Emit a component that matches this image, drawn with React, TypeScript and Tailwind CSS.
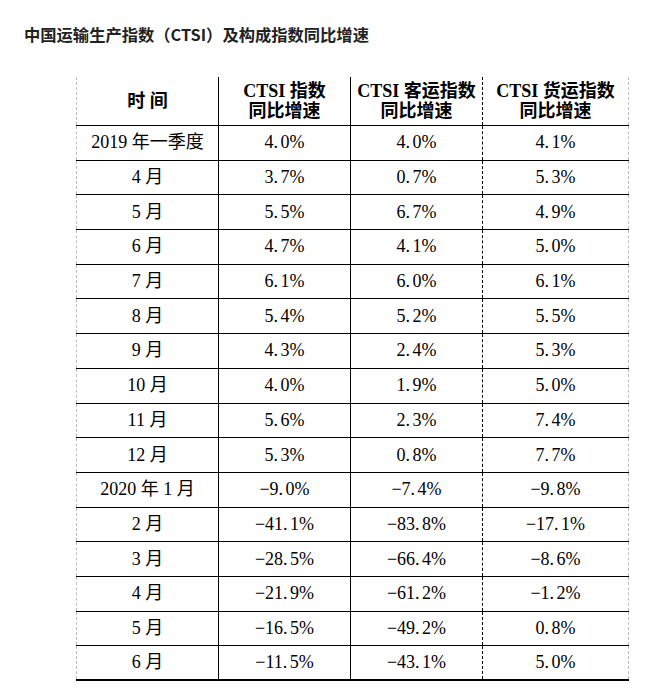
import React from 'react';

const rows: [string, string, string, string][] = [
  ['2019 年一季度', '4.0%', '4.0%', '4.1%'],
  ['4 月', '3.7%', '0.7%', '5.3%'],
  ['5 月', '5.5%', '6.7%', '4.9%'],
  ['6 月', '4.7%', '4.1%', '5.0%'],
  ['7 月', '6.1%', '6.0%', '6.1%'],
  ['8 月', '5.4%', '5.2%', '5.5%'],
  ['9 月', '4.3%', '2.4%', '5.3%'],
  ['10 月', '4.0%', '1.9%', '5.0%'],
  ['11 月', '5.6%', '2.3%', '7.4%'],
  ['12 月', '5.3%', '0.8%', '7.7%'],
  ['2020 年 1 月', '−9.0%', '−7.4%', '−9.8%'],
  ['2 月', '−41.1%', '−83.8%', '−17.1%'],
  ['3 月', '−28.5%', '−66.4%', '−8.6%'],
  ['4 月', '−21.9%', '−61.2%', '−1.2%'],
  ['5 月', '−16.5%', '−49.2%', '0.8%'],
  ['6 月', '−11.5%', '−43.1%', '5.0%'],
];

const cols = 'grid grid-cols-[142px_132px_132px_147px]';

// percent values: the period sits in a wider slot, like the source's font
const Num = ({ v }: { v: string }) => {
  const [a, b] = v.split('.');
  return (
    <span>
      {a}
      <span className="inline-block w-[7px]">.</span>
      {b}
    </span>
  );
};

export default function App() {
  return (
    <div className="w-[662px] h-[695px] bg-white text-black">
      {/* Title */}
      <div className="pt-[22px] pl-[24px] h-[77px] text-[16.3px] leading-[24px] font-bold text-[#222] font-['Microsoft_YaHei','Noto_Sans_CJK_SC',sans-serif]">
        中国运输生产指数（CTSI）及构成指数同比增速
      </div>

      {/* Table */}
      <div className="ml-[76px] w-[553px] font-['Liberation_Serif','Noto_Sans_CJK_SC',serif] text-[18px]">
        <div className={`${cols} h-[49px] border-b border-black font-bold leading-[20px]`}>
          <div className="flex items-center justify-center border-l border-dashed border-[#bdbdbd]">时&nbsp;间</div>
          <div className="flex flex-col items-center justify-center border-l border-black">
            <span>CTSI 指数</span>
            <span>同比增速</span>
          </div>
          <div className="flex flex-col items-center justify-center border-l border-black">
            <span>CTSI 客运指数</span>
            <span>同比增速</span>
          </div>
          <div className="flex flex-col items-center justify-center border-l border-black border-r border-r-[#bdbdbd] border-dashed">
            <span>CTSI 货运指数</span>
            <span>同比增速</span>
          </div>
        </div>

        {rows.map((r, i) => {
          const last = i === rows.length - 1;
          return (
            <div
              key={i}
              className={`${cols} h-[34.7px] ${last ? 'border-b-2' : 'border-b'} border-black`}
            >
              <div className="flex items-center justify-center border-l border-dashed border-[#bdbdbd]">{r[0]}</div>
              <div className="flex items-center justify-center border-l border-black"><Num v={r[1]} /></div>
              <div className="flex items-center justify-center border-l border-black"><Num v={r[2]} /></div>
              <div className="flex items-center justify-center border-l border-l-black border-r border-r-[#bdbdbd] border-dashed">
                <Num v={r[3]} />
              </div>
            </div>
          );
        })}
      </div>
    </div>
  );
}
